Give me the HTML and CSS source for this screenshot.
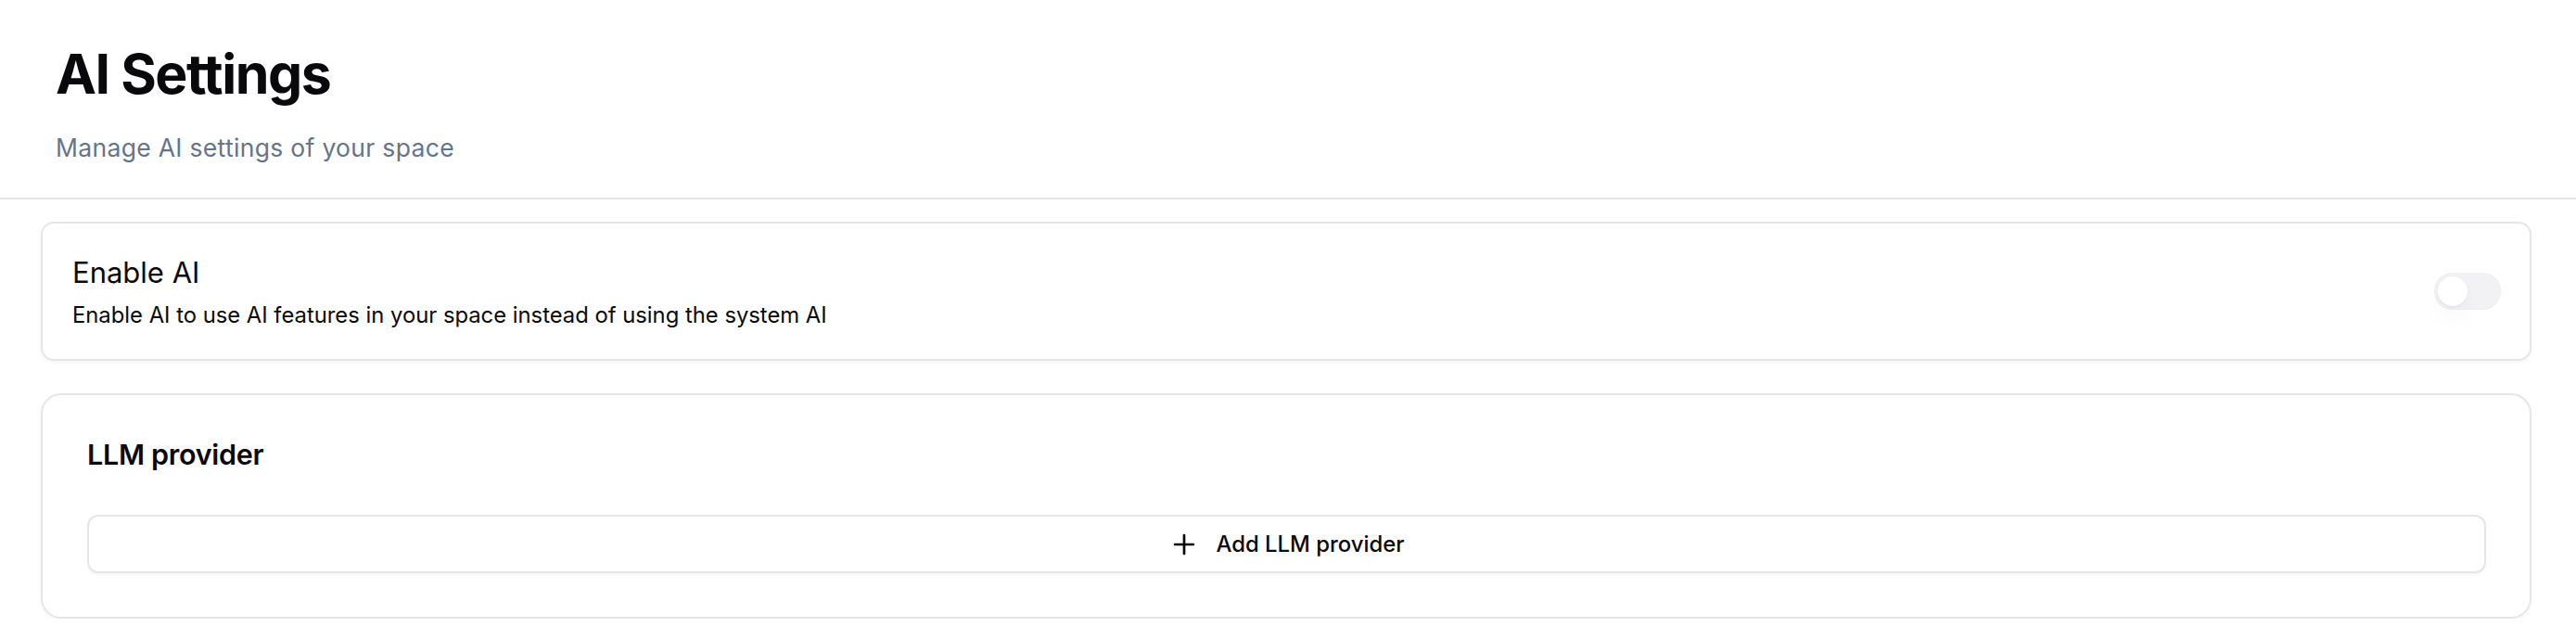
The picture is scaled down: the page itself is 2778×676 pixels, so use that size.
FILE: index.html
```html
<!DOCTYPE html>
<html lang="en">
<head>
<meta charset="utf-8">
<title>AI Settings</title>
<link rel="stylesheet" href="styles.css">
</head>
<body>
<div class="page">
  <header class="header">
    <h1 class="title">AI Settings</h1>
    <p class="subtitle">Manage AI settings of your space</p>
  </header>
  <main class="content">
    <section class="card card-toggle">
      <div class="toggle-text">
        <div class="toggle-title">Enable AI</div>
        <div class="toggle-desc">Enable AI to use AI features in your space instead of using the system AI</div>
      </div>
      <button class="switch" type="button" role="switch" aria-checked="false">
        <span class="switch-thumb"></span>
      </button>
    </section>
    <section class="card card-provider">
      <h2 class="provider-title">LLM provider</h2>
      <button class="add-btn" type="button">
        <svg class="plus" viewBox="0 0 24 24" fill="none" stroke="currentColor" stroke-width="2" stroke-linecap="round" stroke-linejoin="round"><path d="M5 12h14"/><path d="M12 5v14"/></svg>
        <span>Add LLM provider</span>
      </button>
    </section>
  </main>
</div>
</body>
</html>
```
FILE: styles.css
```css
* { box-sizing: border-box; }
html, body { margin: 0; padding: 0; background: #ffffff; }
body {
  font-family: Inter, "Noto Sans", "Liberation Sans", sans-serif;
  color: #09090b;
}
.page { width: 100%; }
.header {
  padding: 44px 60px 36px;
  border-bottom: 2px solid #e6e6e9;
}
.title {
  margin: 0;
  font-size: 59px;
  line-height: 72px;
  font-weight: 700;
  letter-spacing: -0.025em;
  color: #09090b;
}
.subtitle {
  margin: 25px 0 0;
  font-size: 26.5px;
  line-height: 36px;
  letter-spacing: 0.012em;
  color: #64748b;
}
.content {
  padding: 24px 48px 0 44px;
  display: flex;
  flex-direction: column;
  gap: 35px;
}
.card {
  border: 2px solid #e6e6e9;
  background: #fff;
  box-shadow: 0 2px 4px rgba(0,0,0,0.04);
}
.card-toggle {
  border-radius: 14px;
  height: 150px;
  padding: 2px 31px 0 32px;
  display: flex;
  align-items: center;
  justify-content: space-between;
}
.toggle-text { display: flex; flex-direction: column; gap: 8px; }
.toggle-title {
  font-size: 31px;
  line-height: 42px;
  font-weight: 400;
}
.toggle-desc {
  font-size: 23.8px;
  line-height: 34px;
}
.switch {
  width: 72px;
  height: 40px;
  border-radius: 20px;
  border: 0;
  padding: 4px;
  margin-bottom: 2px;
  background: #f2f2f4;
  display: flex;
  align-items: center;
  cursor: pointer;
  box-shadow: inset 0 0 0 1px #efeff1;
}
.switch-thumb {
  width: 32px;
  height: 32px;
  border-radius: 50%;
  background: #fff;
  box-shadow: 0 1px 3px rgba(0,0,0,0.06), 0 14px 24px rgba(0,0,0,0.03);
}
.card-provider {
  border-radius: 22px;
  height: 243px;
  padding: 40px 47px 0 48px;
}
.provider-title {
  margin: 0;
  font-size: 30.5px;
  line-height: 48px;
  font-weight: 600;
  letter-spacing: -0.01em;
}
.add-btn {
  margin-top: 41px;
  width: 100%;
  height: 63px;
  border: 2px solid #e6e6e9;
  border-radius: 12px;
  background: #fff;
  box-shadow: 0 2px 3px rgba(0,0,0,0.04);
  display: flex;
  align-items: center;
  justify-content: center;
  gap: 17px;
  font-family: inherit;
  font-size: 23.9px;
  font-weight: 500;
  color: #09090b;
  cursor: pointer;
}
.plus { width: 34px; height: 34px; stroke-width: 1.9; }
```
